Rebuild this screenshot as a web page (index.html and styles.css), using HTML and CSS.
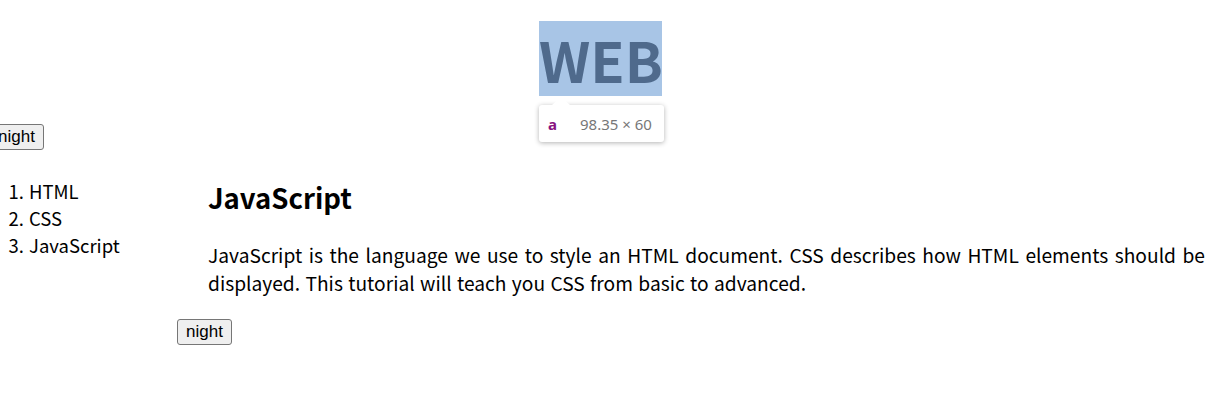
FILE: index.html
```html
<!DOCTYPE html>
<html lang="ko">
<head>
<meta charset="utf-8">
<title>WEB</title>
<link rel="stylesheet" href="styles.css">
</head>
<body>
<header class="top">
  <h1 class="logo"><a class="logo-link" href="index.html">WEB</a></h1>
  <div class="tip">
    <span class="tip-tag">a</span>
    <span class="tip-size">98.35 × 60</span>
  </div>
</header>
<button class="btn btn-first" type="button">night</button>
<div class="grid">
  <ol class="nav">
    <li>HTML</li>
    <li>CSS</li>
    <li>JavaScript</li>
  </ol>
  <div class="main">
    <div class="article">
      <h2 class="title">JavaScript</h2>
      <p class="text">JavaScript is the language we use to style an HTML document. CSS describes how HTML elements should be displayed. This tutorial will teach you CSS from basic to advanced.</p>
    </div>
    <button class="btn" type="button">night</button>
  </div>
</div>
</body>
</html>
```
FILE: styles.css
```css
html, body {
  margin: 0;
  padding: 0;
  background: #ffffff;
  overflow: hidden;
}
body {
  font-family: "Noto Sans CJK KR", "Noto Sans", sans-serif;
  color: #000;
  width: 1217px;
  height: 413px;
}
.top {
  position: relative;
  display: flex;
  justify-content: center;
  padding: 21px 16px 0 0;
  height: 75px;
}
.logo {
  margin: 0;
  font-size: 56px;
  line-height: 75px;
  font-weight: 700;
}
.logo-link {
  display: block;
  width: 123px;
  height: 75px;
  background: #a8c5e6;
  color: #4f6a8c;
  text-decoration: none;
  text-align: center;
}
.tip {
  position: absolute;
  left: 539px;
  top: 105px;
  width: 125px;
  height: 37px;
  background: #fff;
  border-radius: 3px;
  box-shadow: 0 1px 5px rgba(0,0,0,0.3);
  display: flex;
  align-items: center;
  font-family: "Noto Sans", sans-serif;
  font-size: 15px;
  box-sizing: border-box;
  padding-left: 9px;
}
.tip::before {
  content: "";
  position: absolute;
  left: 13px;
  top: -8px;
  border-left: 9px solid transparent;
  border-right: 9px solid transparent;
  border-bottom: 8px solid #fff;
}
.tip-tag {
  color: #881280;
  font-weight: 700;
  margin-right: 23px;
}
.tip-size {
  color: #777;
}
.btn {
  font-family: "Liberation Sans", Arial, sans-serif;
  font-size: 17px;
  line-height: 20px;
  height: 26px;
  padding: 0 8px;
  background: #efefef;
  border: 1px solid #767676;
  border-radius: 3px;
  color: #000;
  box-sizing: border-box;
  display: block;
}
.btn-first {
  margin: 28px 0 0 -11px;
}
.grid {
  display: grid;
  grid-template-columns: 177px 1fr;
  margin-top: 24px;
}
.nav {
  margin: 0;
  padding: 4px 0 0 29px;
  font-size: 18.5px;
  line-height: 27px;
}
.main {
  padding-right: 12px;
}
.article {
  padding-left: 31px;
}
.title {
  margin: 0;
  font-size: 27.5px;
  line-height: 46px;
  font-weight: 700;
}
.text {
  margin: 21px 0 0;
  font-size: 19.2px;
  line-height: 28px;
  text-align: justify;
}
.main .btn {
  margin-top: 22px;
}
```
